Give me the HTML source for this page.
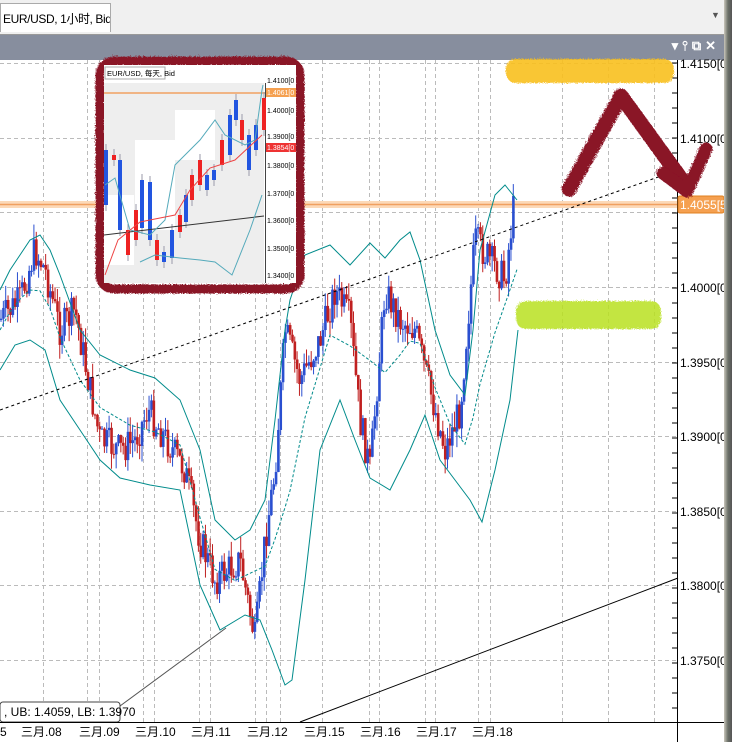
<!DOCTYPE html>
<html><head><meta charset="utf-8"><style>
html,body{margin:0;padding:0;width:732px;height:742px;overflow:hidden;background:#fff;font-family:"Liberation Sans","Noto Sans CJK SC",sans-serif}
#tabbar{position:absolute;left:0;top:0;width:724px;height:34px;background:#f0f0f0;border-bottom:1px solid #999}
#tab{position:absolute;left:0;top:3px;width:111px;height:29px;background:#fff;border:1px solid #aaa;border-bottom:none;font-size:12px;line-height:30px;padding-left:2px;box-sizing:border-box;white-space:nowrap;letter-spacing:-0.4px;overflow:hidden}
#title{position:absolute;left:0;top:35px;width:724px;height:25px;background:#878e9e}
#rstrip{position:absolute;left:724px;top:0;width:8px;height:742px;background:linear-gradient(90deg,#c9c6bb,#6b7068 50%,#555)}
svg{position:absolute;left:0;top:0}
</style></head><body>
<div id="tabbar"><div id="tab">EUR/USD, 1小时, Bid</div>
<div style="position:absolute;left:711px;top:10px;font-size:9px;color:#555">▼</div></div>
<div id="title"><div style="position:absolute;right:4px;top:3px;color:#fff;font-size:13px;font-weight:bold;letter-spacing:4px">▾⫯⧉✕</div></div>
<div id="rstrip"></div>
<svg id="s" width="724" height="742" viewBox="0 0 724 742">
<defs><filter id="rough"><feTurbulence baseFrequency="0.9" numOctaves="2" result="n"/><feDisplacementMap in="SourceGraphic" in2="n" scale="4"/></filter></defs>
<g id="grid" stroke="#bbb" stroke-dasharray="4,3" stroke-width="1"></g>
<rect x="0" y="201" width="678" height="7" fill="#fcd9b8"/>
<line x1="0" y1="204.5" x2="678" y2="204.5" stroke="#f0a060" stroke-width="1.5"/>
<g id="candles"></g>
<g id="bands" fill="none"></g>
<line x1="0" y1="410" x2="678" y2="170" stroke="#000" stroke-dasharray="3,3"/>
<line x1="300" y1="722" x2="678" y2="578" stroke="#000"/>
<line x1="120" y1="706" x2="226" y2="628" stroke="#555"/>
<rect x="0" y="702" width="120" height="20" rx="3" fill="#fff" stroke="#444"/>
<text x="4" y="716" font-size="12" font-family="Liberation Sans">, UB: 1.4059, LB: 1.3970</text>
<line x1="0" y1="722.5" x2="724" y2="722.5" stroke="#000"/>
<line x1="677.5" y1="60" x2="677.5" y2="742" stroke="#000"/>
<g id="axis" font-size="12" font-family="Liberation Sans" fill="#000"></g>
<rect x="678" y="196" width="46" height="17" rx="2" fill="#f5a050" stroke="#e08020"/>
<text x="680" y="209" font-size="12" fill="#fff">1.4055[5</text>
<g filter="url(#rough)">
<rect x="505" y="58" width="168" height="24" rx="10" fill="#f8c020" opacity="0.9"/>
<rect x="515" y="300" width="145" height="28" rx="10" fill="#b8e020" opacity="0.85"/>
<polyline points="568,188 620,95 686,186" fill="none" stroke="#8a1228" stroke-width="15" stroke-linejoin="round" stroke-linecap="round"/>
<polyline points="662,172 686,190 705,148" fill="none" stroke="#8a1228" stroke-width="13" stroke-linecap="round" stroke-linejoin="round"/>
</g>
<g>
<rect x="99" y="60" width="200" height="228" rx="14" fill="none" stroke="#8a1228" stroke-width="9" filter="url(#rough)"/>
<rect x="104" y="65" width="192" height="218" fill="#fff"/>
<rect x="104" y="83" width="160" height="200" fill="#eee"/>
<rect x="135" y="140" width="40" height="90" fill="#fff"/>
<rect x="175" y="110" width="40" height="50" fill="#fff"/>
<rect x="104" y="195" width="30" height="70" fill="#fff"/>
<line x1="265.5" y1="83" x2="265.5" y2="283" stroke="#444"/>
<rect x="105" y="67" width="60" height="12" fill="#fff" stroke="#aaa"/>
<text x="107" y="76" font-size="7.5">EUR/USD, 每天, Bid</text>
<line x1="104" y1="93" x2="265" y2="93" stroke="#f0a060" stroke-width="1.5"/>
<g id="inset"></g>
<line x1="104" y1="235" x2="264" y2="216" stroke="#333"/>
<polyline points="105,185 115,178 130,230 150,235 165,220 175,165 200,140 215,120 225,135 245,145 255,140 262,90 263,85" fill="none" stroke="#5ab" />
<polyline points="140,262 155,255 180,258 200,260 215,262 232,275 250,230 262,195" fill="none" stroke="#5ab"/>
<polyline points="105,275 118,240 140,222 160,218 175,215 190,190 210,168 235,160 262,135" fill="none" stroke="#e44"/>
<g font-size="7" fill="#000"><text x="267" y="83">1.4100[0</text><text x="267" y="113">1.4000[0</text><text x="267" y="139">1.3900[0</text><text x="267" y="168">1.3800[0</text><text x="267" y="196">1.3700[0</text><text x="267" y="223">1.3600[0</text><text x="267" y="251">1.3500[0</text><text x="267" y="278">1.3400[0</text></g>
<rect x="266" y="88" width="30" height="9" fill="#f5a050"/><text x="267" y="95" font-size="7" fill="#fff">1.4061[0</text>
<rect x="266" y="143" width="30" height="9" fill="#e33"/><text x="267" y="150" font-size="7" fill="#fff">1.3854[0</text>
</g>
</svg>
<script>
var NS="http://www.w3.org/2000/svg",g=id=>document.getElementById(id);
function el(p,t,a){var e=document.createElementNS(NS,t);for(var k in a)e.setAttribute(k,a[k]);g(p).appendChild(e);return e}
[43,87,99,143,154,199,210,255,266,280,322,369,379,425,435,478,490,562,608,654].forEach(x=>el("grid","line",{x1:x+.5,y1:60,x2:x+.5,y2:722}));
[63,138,212,287,362,436,511,585,660].forEach(y=>el("grid","line",{x1:0,y1:y+.5,x2:678,y2:y+.5}));
var prices=["1.4150[0]","1.4100[0]","1.4050[0]","1.4000[0]","1.3950[0]","1.3900[0]","1.3850[0]","1.3800[0]","1.3750[0]"];
[63,138,212,287,362,436,511,585,660].forEach((y,i)=>{if(i!=2)el("axis","text",{x:680,y:y+5}).textContent=prices[i];});
for(var y=63;y<722;y+=15)el("axis","line",{x1:672,y1:y,x2:678,y2:y,stroke:"#000"});
[["5",0],["三月.08",21],["三月.09",79],["三月.10",135],["三月.11",191],["三月.12",247],["三月.15",304],["三月.16",360],["三月.17",416],["三月.18",472]].forEach(d=>el("axis","text",{x:d[1],y:736}).textContent=d[0]);
function interp(pts,x){for(var i=1;i<pts.length;i++)if(x<=pts[i][0]){var a=pts[i-1],b=pts[i],t=(x-a[0])/(b[0]-a[0]);return a[1]+(b[1]-a[1])*t}return pts[pts.length-1][1]}
var P=[[0,320],[20,300],[35,250],[45,270],[60,330],[75,310],[90,390],[100,440],[120,450],[135,440],[148,410],[160,430],[185,470],[200,540],[215,580],[240,560],[255,640],[265,540],[275,470],[285,330],[300,380],[320,340],[335,290],[350,320],[360,420],[370,470],[385,290],[400,320],[415,330],[430,390],[445,450],[460,410],[475,240],[490,260],[505,280],[515,195]];
var seed=7;function r(){seed=(seed*9301+49297)%233280;return seed/233280}
var prev=interp(P,0);
for(var x=1;x<=515;x+=2.35){var c=interp(P,x)+(r()-.5)*34,o=prev;prev=c;var hi=Math.min(o,c)-r()*16,lo=Math.max(o,c)+r()*16;var col=c<o?"#2a4fd0":"#c02020";
el("candles","line",{x1:x,y1:hi,x2:x,y2:lo,stroke:col,"stroke-width":1});el("candles","rect",{x:x-1.2,y:Math.min(o,c),width:2.6,height:Math.max(1,Math.abs(c-o)),fill:col});}
var U=[[0,290],[10,270],[20,255],[30,240],[40,235],[50,250],[60,275],[80,330],[100,355],[130,370],[155,378],[180,400],[200,450],[215,520],[235,540],[250,530],[265,500],[275,420],[285,330],[290,300],[305,255],[330,245],[350,265],[370,243],[385,258],[400,240],[410,232],[420,260],[435,330],[450,375],[465,395],[473,330],[480,250],[495,195],[505,185],[517,200]];
var L=[[0,370],[15,345],[30,340],[45,350],[60,400],[80,430],[100,460],[120,478],[150,485],[180,490],[200,585],[220,630],[245,615],[260,620],[272,650],[285,685],[292,680],[305,580],[320,450],[340,400],[355,440],[370,478],[390,490],[410,450],[425,415],[440,460],[455,480],[470,500],[482,522],[495,470],[510,400],[518,330]];
function pl(pts,dash){var s=pts.map(p=>p.join(",")).join(" ");var a={points:s,stroke:"#008b8b","stroke-width":1,fill:"none"};if(dash)a["stroke-dasharray"]="3,2";el("bands","polyline",a)}
pl(U);pl(L);pl(U.map((p,i)=>[p[0],(p[1]+interp(L,p[0]))/2]),1);
var ic=[[104,150,205],[112,155,160],[118,160,230],[126,230,255],[134,210,240],[140,180,228],[148,182,240],[155,240,260],[162,252,262],[170,230,258],[178,215,232],[184,195,222],[190,175,200],[198,160,185],[205,175,190],[212,170,180],[220,140,165],[228,115,155],[234,100,120],[240,120,140],[247,135,170],[254,125,150],[262,98,130]];
ic.forEach((c,i)=>{var col=i%3==1||i==3||i==12||i==13?"#e22":"#2255e0";el("inset","line",{x1:c[0]+2,y1:c[1]-6,x2:c[0]+2,y2:c[2]+6,stroke:"#99a"});el("inset","rect",{x:c[0],y:c[1],width:4,height:c[2]-c[1],fill:col});});
</script>
</body></html>
